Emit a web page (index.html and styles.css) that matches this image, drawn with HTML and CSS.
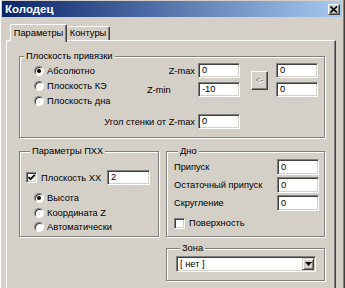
FILE: index.html
```html
<!DOCTYPE html>
<html lang="ru">
<head>
<meta charset="utf-8">
<title>Колодец</title>
<link rel="stylesheet" href="styles.css">
</head>
<body>
<div class="win">
  <div class="title">
    <span class="title-text">Колодец</span>
    <span class="close"><svg width="8" height="7" viewBox="0 0 8 7"><path d="M0.5 0.5 L7 6.5 M7 0.5 L0.5 6.5" stroke="#000" stroke-width="1.6"/></svg></span>
  </div>
  <div class="tabs">
    <div class="tab active">Параметры</div>
    <div class="tab">Контуры</div>
  </div>
  <div class="panel">
    <div class="group g1">
      <div class="legend">Плоскость привязки</div>
      <div class="g1-body">
        <div class="radios r-top">
          <div class="opt"><span class="radio on"></span>Абсолютно</div>
          <div class="opt"><span class="radio"></span>Плоскость КЭ</div>
          <div class="opt"><span class="radio"></span>Плоскость дна</div>
        </div>
        <div class="lbl zmax">Z-max</div>
        <div class="edit e-zmax">0</div>
        <div class="btn arrow"><span>&lt;-</span></div>
        <div class="edit e-r1">0</div>
        <div class="lbl zmin">Z-min</div>
        <div class="edit e-zmin">-10</div>
        <div class="edit e-r2">0</div>
        <div class="lbl angle">Угол стенки от Z-max</div>
        <div class="edit e-angle">0</div>
      </div>
    </div>
    <div class="bottom">
      <div class="group pxx">
        <div class="legend">Параметры ПХХ</div>
        <div class="chk-row">
          <span class="check on"><svg width="9" height="9" viewBox="0 0 9 9"><path d="M1.5 4 L3.5 6.2 L7.8 1.8" fill="none" stroke="#000" stroke-width="1.8"/></svg></span>
          <span>Плоскость ХХ</span>
          <div class="edit e-pxx">2</div>
        </div>
        <div class="radios r-pxx">
          <div class="opt"><span class="radio on"></span>Высота</div>
          <div class="opt"><span class="radio"></span>Координата Z</div>
          <div class="opt"><span class="radio"></span>Автоматически</div>
        </div>
      </div>
      <div class="rcol">
        <div class="group dno">
          <div class="legend">Дно</div>
          <div class="dno-rows">
            <div class="row"><span>Припуск</span><div class="edit e-dno">0</div></div>
            <div class="row"><span>Остаточный припуск</span><div class="edit e-dno">0</div></div>
            <div class="row"><span>Скругление</span><div class="edit e-dno">0</div></div>
          </div>
          <div class="chk-row surf"><span class="check"></span><span>Поверхность</span></div>
        </div>
        <div class="group zona">
          <div class="legend">Зона</div>
          <div class="combo">
            <span class="combo-text">[ нет ]</span>
            <span class="combo-btn"><svg width="7" height="4" viewBox="0 0 7 4"><path d="M0 0 H7 L3.5 4 Z" fill="#000"/></svg></span>
          </div>
        </div>
      </div>
    </div>
  </div>
</div>
</body>
</html>
```
FILE: styles.css
```css
html, body {
  margin: 0;
  padding: 0;
  background: #d4d0c8;
}
body {
  font-family: "Liberation Sans", Arial, sans-serif;
  font-size: 9.3px;
  color: #000;
}
.win {
  width: 345px;
  height: 288px;
  box-sizing: border-box;
  padding: 1px 3px 0 2px;
  background: #d4d0c8;
  overflow: hidden;
  box-shadow: inset 1px 0 #fff, inset -1px 0 #404040, inset -2px 0 #808080;
}
.title {
  height: 16px;
  display: flex;
  align-items: center;
  justify-content: space-between;
  background: linear-gradient(to right, #0a246a, #a6caf0);
}
.title-text {
  color: #fff;
  font-weight: bold;
  font-size: 11.5px;
  padding-left: 3px;
}
.close {
  width: 12px;
  height: 11px;
  margin-right: 2px;
  box-sizing: border-box;
  background: #d4d0c8;
  border: 1px solid;
  border-color: #fff #404040 #404040 #fff;
  box-shadow: inset -1px -1px #808080;
  display: flex;
  align-items: center;
  justify-content: center;
}
.close svg { display: block; }
.tabs {
  display: flex;
  align-items: flex-end;
  height: 16px;
  margin-top: 7px;
  padding-left: 8px;
}
.tab {
  box-sizing: border-box;
  height: 14px;
  width: 43px;
  border-top: 1px solid #fff;
  border-right: 1px solid #404040;
  border-radius: 2px 2px 0 0;
  box-shadow: inset -1px 0 #808080;
  text-align: center;
  line-height: 13px;
  background: #d4d0c8;
}
.tab.active {
  position: relative;
  z-index: 1;
  height: 18px;
  width: 57px;
  margin-bottom: -2px;
  border-left: 1px solid #fff;
  line-height: 17px;
}
.panel {
  box-sizing: border-box;
  margin-left: 4px;
  width: 330px;
  height: 300px;
  padding: 15px 0 0 12px;
  border: 1px solid;
  border-color: #fff #404040 #404040 #fff;
  box-shadow: inset -1px -1px #808080, inset 1px 1px #d4d0c8;
}
.group {
  box-sizing: border-box;
  border: 1px solid #808080;
  box-shadow: 1px 1px 0 #fff, inset 1px 1px 0 #fff;
}
.legend {
  width: max-content;
  height: 12px;
  line-height: 12px;
  margin: -7px 0 0 4px;
  padding: 0 2px;
  background: #d4d0c8;
}
.g1 {
  width: 306px;
  padding-bottom: 8px;
}
.g1-body {
  display: grid;
  grid-template-columns: 110px 51px 3px 42px 11px 17px 8px 42px;
  grid-template-rows: 15px 4px 15px 17px 15px;
  padding: 1px 0 0 14px;
  align-items: center;
}
.radios { display: flex; flex-direction: column; }
.opt {
  display: flex;
  align-items: center;
  height: 15px;
  white-space: nowrap;
}
.radio {
  box-sizing: border-box;
  width: 10px;
  height: 10px;
  margin-right: 3px;
  border-radius: 50%;
  background: #fff;
  border: 1px solid;
  border-color: #808080 #fff #fff #808080;
  box-shadow: inset 1px 1px #404040;
  display: flex;
  align-items: center;
  justify-content: center;
  flex: none;
}
.radio.on::after {
  content: "";
  width: 4px;
  height: 4px;
  border-radius: 50%;
  background: #000;
}
.r-top {
  grid-column: 1;
  grid-row: 1 / 4;
  align-self: start;
}
.lbl { white-space: nowrap; }
.zmax { grid-column: 2; grid-row: 1; justify-self: end; }
.zmin { grid-column: 2; grid-row: 3; justify-self: start; margin-left: 3px; }
.angle { grid-column: 1 / 3; grid-row: 5; justify-self: end; }
.e-zmax { grid-column: 4; grid-row: 1; }
.e-zmin { grid-column: 4; grid-row: 3; }
.e-angle { grid-column: 4; grid-row: 5; }
.e-r1 { grid-column: 8; grid-row: 1; }
.e-r2 { grid-column: 8; grid-row: 3; }
.edit {
  box-sizing: border-box;
  height: 15px;
  background: #fff;
  border: 1px solid;
  border-color: #808080 #fff #fff #808080;
  box-shadow: inset 1px 1px #404040, inset -1px -1px #d4d0c8;
  padding-left: 3px;
  line-height: 13px;
  white-space: nowrap;
}
.btn {
  box-sizing: border-box;
  background: #d4d0c8;
  border: 1px solid;
  border-color: #fff #404040 #404040 #fff;
  box-shadow: inset -1px -1px #808080;
  display: flex;
  align-items: center;
  justify-content: center;
}
.arrow {
  grid-column: 6;
  grid-row: 1 / 4;
  height: 19px;
  align-self: center;
  color: #808080;
  text-shadow: 1px 1px #fff;
  font-size: 8.5px;
  white-space: nowrap;
  padding-bottom: 1px;
}
.bottom {
  display: flex;
  gap: 7px;
  margin-top: 13px;
}
.pxx {
  width: 140px;
  height: 86px;
  padding: 0 8px 0 6px;
}
.chk-row {
  display: flex;
  align-items: center;
  margin-top: 13px;
  height: 15px;
  white-space: nowrap;
}
.check {
  box-sizing: border-box;
  width: 11px;
  height: 11px;
  margin-right: 4px;
  background: #fff;
  border: 1px solid;
  border-color: #808080 #fff #fff #808080;
  box-shadow: inset 1px 1px #404040, inset -1px -1px #d4d0c8;
  display: flex;
  align-items: center;
  justify-content: center;
  flex: none;
}
.check svg { display: block; }
.e-pxx {
  width: 43px;
  margin-left: auto;
}
.r-pxx {
  margin: 6px 0 0 8px;
}
.r-pxx .opt { height: 14.5px; }
.rcol { display: flex; flex-direction: column; }
.dno {
  width: 159px;
  height: 86px;
  padding: 0 5px 0 7px;
}
.dno-rows {
  display: flex;
  flex-direction: column;
  gap: 2px;
  margin-top: 2px;
}
.row {
  display: flex;
  align-items: center;
  justify-content: space-between;
  height: 16px;
  white-space: nowrap;
}
.e-dno { width: 42px; height: 16px; line-height: 14px; }
.surf {
  margin-top: 6px;
  height: 12px;
}
.zona {
  width: 159px;
  height: 33px;
  margin-top: 11px;
  padding: 0 8px 0 9px;
}
.combo {
  box-sizing: border-box;
  margin-top: 2px;
  height: 16px;
  background: #fff;
  border: 1px solid;
  border-color: #808080 #fff #fff #808080;
  box-shadow: inset 1px 1px #404040, inset -1px -1px #d4d0c8;
  display: flex;
  align-items: center;
  justify-content: space-between;
  padding: 1px 1px 1px 3px;
}
.combo-text { line-height: 12px; }
.combo-btn {
  box-sizing: border-box;
  width: 12px;
  height: 12px;
  background: #d4d0c8;
  border: 1px solid;
  border-color: #d4d0c8 #404040 #404040 #d4d0c8;
  box-shadow: inset 1px 1px #fff, inset -1px -1px #808080;
  display: flex;
  align-items: center;
  justify-content: center;
}
.combo-btn svg { display: block; }
```
